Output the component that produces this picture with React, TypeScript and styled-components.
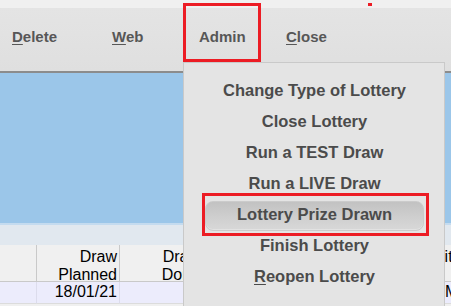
import React from "react";
import styled, { createGlobalStyle } from "styled-components";

const GlobalStyle = createGlobalStyle`
  html, body { margin: 0; padding: 0; background: #f0f0f0; }
  body { font-family: "Liberation Sans", Arial, sans-serif; overflow: hidden; }
`;

const Page = styled.div`
  position: relative;
  width: 451px;
  height: 306px;
  overflow: hidden;
  display: flex;
  flex-direction: column;
  background: #f0f0f0;
`;

const TopStrip = styled.div`
  height: 8px;
  flex: none;
  background: #f0f0f0;
`;

const Toolbar = styled.div`
  height: 63px;
  flex: none;
  display: flex;
  padding-left: 12px;
  background: linear-gradient(#e4e4e4, #dfdfdf);
  border-bottom: 2px solid #8c8c8c;
`;

const ToolButton = styled.div<{ $w: number }>`
  position: relative;
  width: ${(p) => p.$w}px;
  flex: none;
  padding-top: 20px;
  font-size: 15px;
  line-height: 17px;
  font-weight: bold;
  color: #575757;
  white-space: nowrap;
`;

const Key = styled.span`
  text-decoration: underline;
  text-underline-offset: 2px;
`;

const Callout = styled.div<{ $l: number; $t: number; $w: number; $h: number }>`
  position: absolute;
  left: ${(p) => p.$l}px;
  top: ${(p) => p.$t}px;
  width: ${(p) => p.$w}px;
  height: ${(p) => p.$h}px;
  box-sizing: border-box;
  border: 3px solid #ec1c24;
  pointer-events: none;
`;

const Dot = styled.div`
  position: absolute;
  left: 368px;
  top: 3px;
  width: 4px;
  height: 3px;
  background: #ec1c24;
`;

const BluePanel = styled.div`
  height: 150px;
  flex: none;
  background: #9bc6e9;
  border-bottom: 2px solid #c4dbef;
`;

const FilterStrip = styled.div`
  height: 20px;
  flex: none;
  background: #e1e8ef;
`;

const Table = styled.div`
  display: grid;
  grid-template-columns: 37px 83px 83px 220px 32px;
  width: 455px;
  font-size: 16px;
  color: #000;
`;

const HeadCell = styled.div<{ $align?: string }>`
  height: 37px;
  box-sizing: border-box;
  background: #f0f0f0;
  border-right: 1px solid #c9c9c9;
  border-bottom: 1px solid #c9c9c9;
  padding: 3px 2px 0 2px;
  line-height: 18px;
  text-align: ${(p) => p.$align || "right"};
  white-space: nowrap;
  overflow: hidden;
`;

const BodyCell = styled.div<{ $align?: string; $indent?: number }>`
  height: 22px;
  box-sizing: border-box;
  background: #ececfc;
  border-right: 1px solid #dcdcec;
  border-bottom: 1px solid #dcdcdc;
  padding: 0 2px 0 ${(p) => p.$indent ?? 2}px;
  line-height: 20px;
  text-align: ${(p) => p.$align || "right"};
  white-space: nowrap;
  overflow: hidden;
`;

const Menu = styled.div`
  position: absolute;
  left: 183px;
  top: 62px;
  width: 262px;
  height: 270px;
  box-sizing: border-box;
  background: #e4e4e4;
  border: 1px solid #c9c9c9;
  padding: 12px 20px 0 21px;
  display: flex;
  flex-direction: column;
`;

const MenuItem = styled.div<{ $active?: boolean }>`
  position: relative;
  height: 31px;
  line-height: 31px;
  text-align: center;
  font-size: 16.5px;
  font-weight: bold;
  color: #4b4b4b;
  white-space: nowrap;
  z-index: 0;
  &::before {
    content: "";
    display: ${(p) => (p.$active ? "block" : "none")};
    position: absolute;
    left: 0;
    right: 0;
    top: 2px;
    bottom: -1px;
    z-index: -1;
    border-radius: 8px;
    border: 1px solid #cbcbcb;
    background: linear-gradient(#c2c2c2, #cfcfcf 55%, #d8d8d8);
    box-shadow: inset 0 -1px 0 #e2e2e2;
  }
`;

const menuItems: { label: string; key?: string; active?: boolean }[] = [
  { label: "Change Type of Lottery" },
  { label: "Close Lottery" },
  { label: "Run a TEST Draw" },
  { label: "Run a LIVE Draw" },
  { label: "Lottery Prize Drawn", active: true },
  { label: "Finish Lottery" },
  { label: "Reopen Lottery", key: "R" },
];

export default function App() {
  return (
    <>
      <GlobalStyle />
      <Page>
        <TopStrip />
        <Toolbar>
          <ToolButton $w={100}>
            <Key>D</Key>elete
          </ToolButton>
          <ToolButton $w={87}>
            <Key>W</Key>eb
          </ToolButton>
          <ToolButton $w={87}>
            Admin
            <Callout $l={-16} $t={-5} $w={78} $h={59} />
          </ToolButton>
          <ToolButton $w={87}>
            <Key>C</Key>lose
          </ToolButton>
        </Toolbar>
        <BluePanel />
        <FilterStrip />
        <Table>
          <HeadCell />
          <HeadCell>
            Draw
            <br />
            Planned
          </HeadCell>
          <HeadCell>
            Draw
            <br />
            Done
          </HeadCell>
          <HeadCell />
          <HeadCell $align="left">Edit</HeadCell>
          <BodyCell />
          <BodyCell>18/01/21</BodyCell>
          <BodyCell />
          <BodyCell />
          <BodyCell $align="left" $indent={22}>
            Manual
          </BodyCell>
        </Table>
        <Menu>
          {menuItems.map((m) => (
            <MenuItem key={m.label} $active={m.active}>
              {m.key ? (
                <>
                  <Key>{m.key}</Key>
                  {m.label.slice(m.key.length)}
                </>
              ) : (
                m.label
              )}
              {m.active && <Callout $l={-3} $t={-6} $w={227} $h={43} />}
            </MenuItem>
          ))}
        </Menu>
        <Dot />
      </Page>
    </>
  );
}
